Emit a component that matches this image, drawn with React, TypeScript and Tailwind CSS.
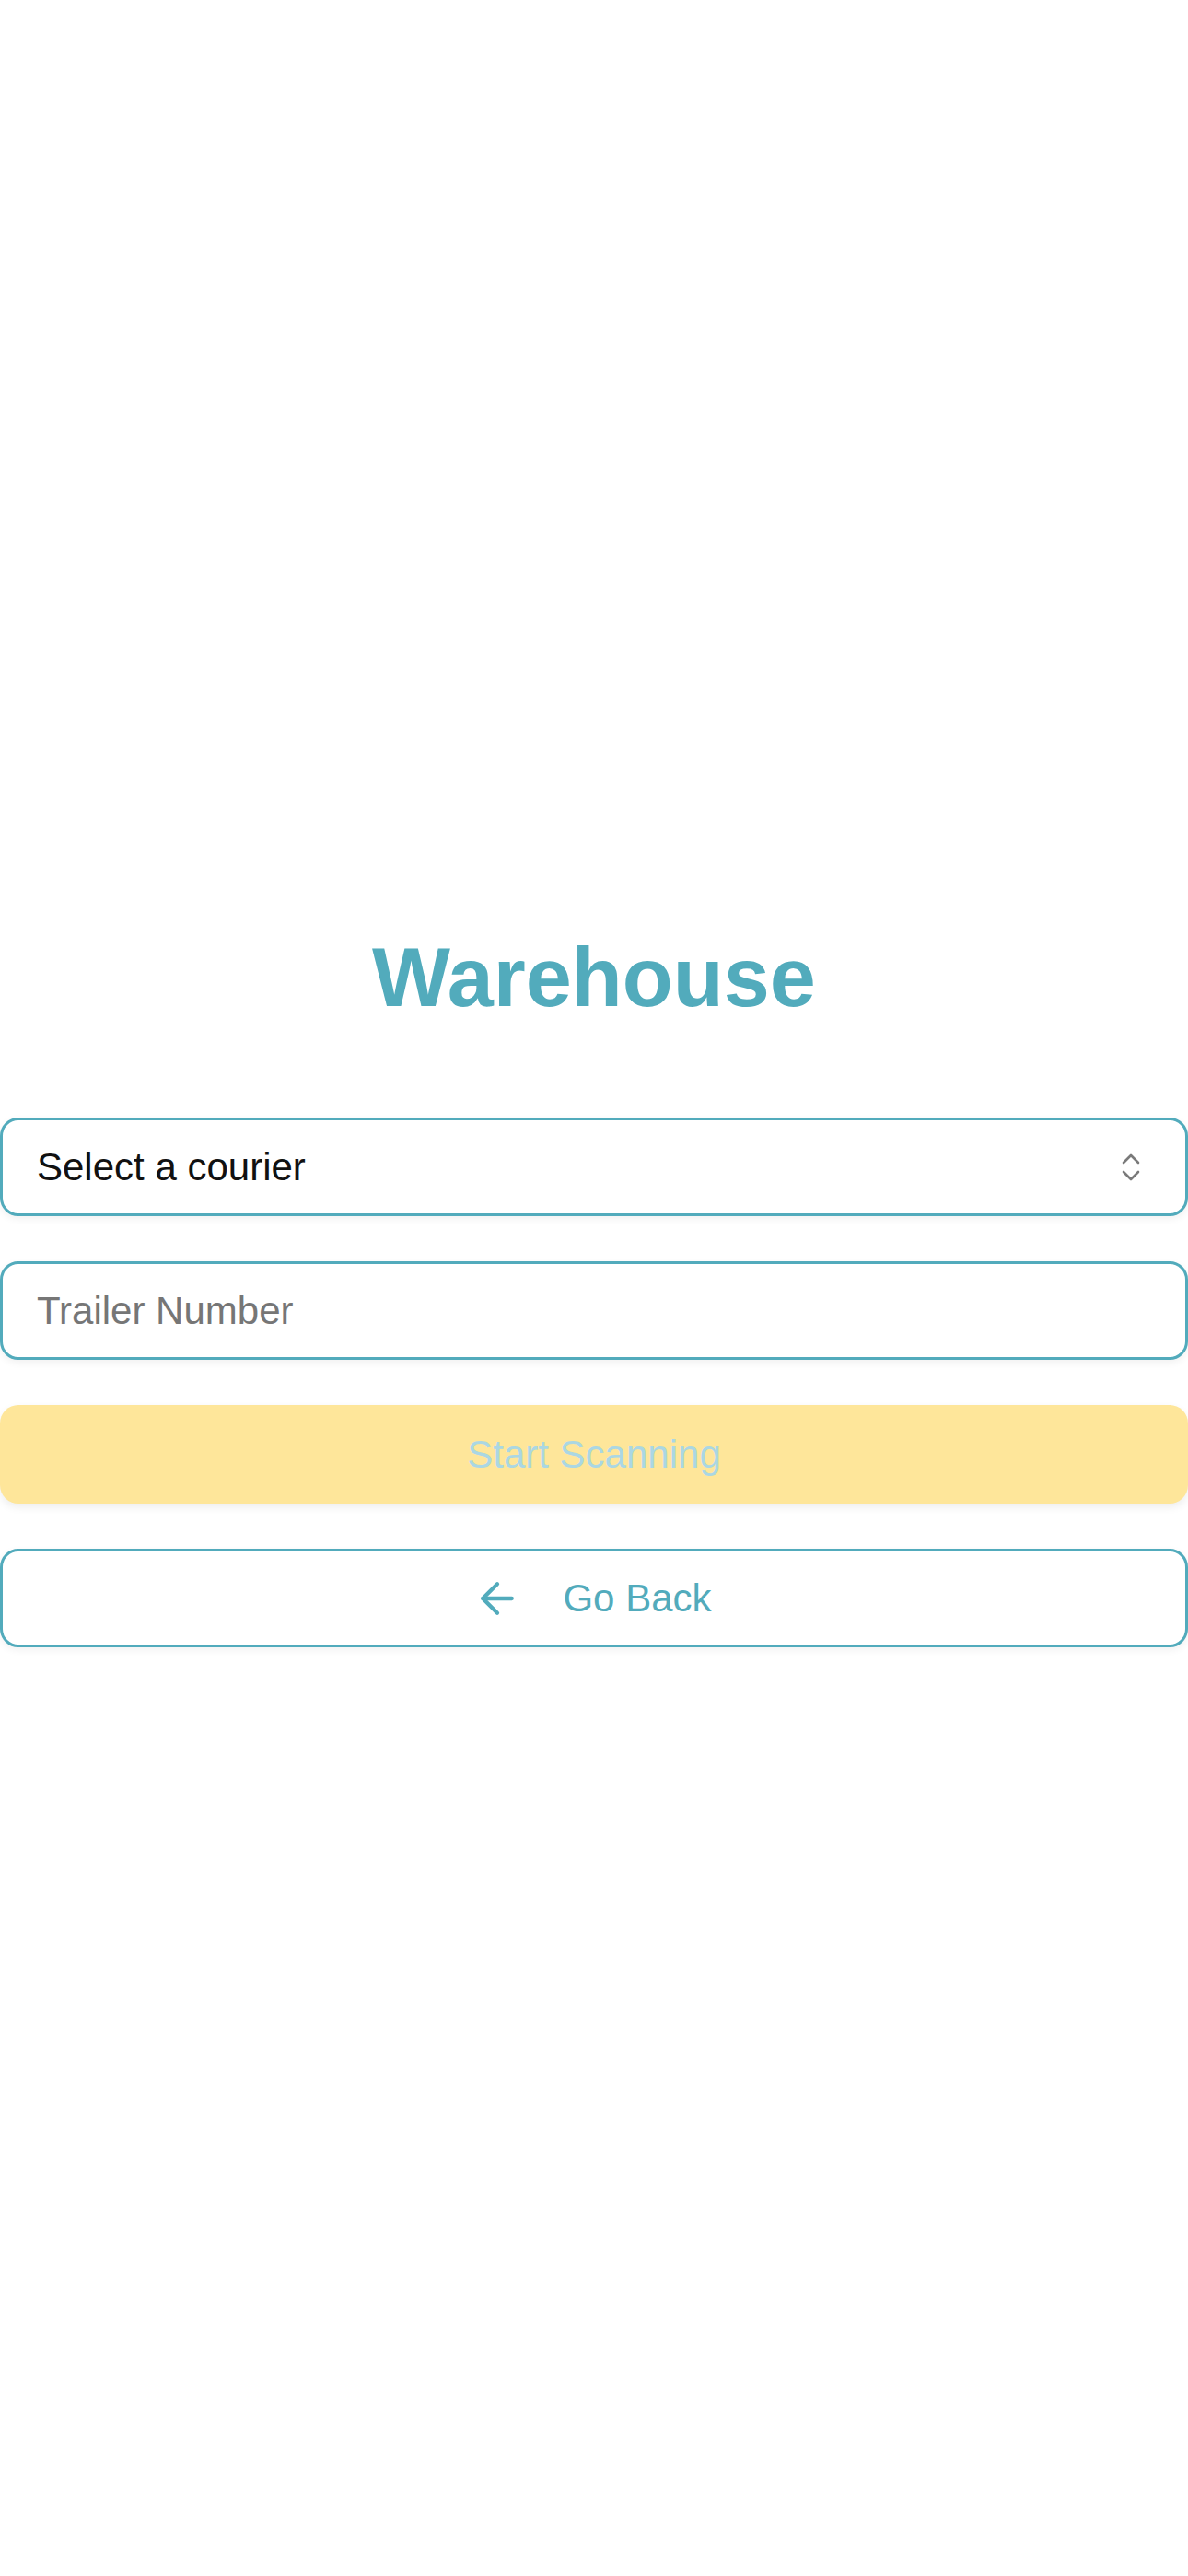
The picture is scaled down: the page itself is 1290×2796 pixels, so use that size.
import React, { useState } from 'react';
import { ArrowLeft } from 'lucide-react';

const teal = 'text-[#52abbc]';

const Chevrons = () => (
  <svg width="20" height="30" viewBox="0 0 20 30" fill="none" stroke="#7a7a7a" strokeWidth="2.6" strokeLinecap="round" strokeLinejoin="round">
    <path d="M2 10 L10 2 L18 10" />
    <path d="M2 20 L10 28 L18 20" />
  </svg>
);

const App = () => {
  const [courier, setCourier] = useState('');
  const [trailer, setTrailer] = useState('');

  const canStart = courier !== '' && trailer.trim() !== '';

  return (
    <div className="min-h-screen bg-white flex flex-col justify-center pt-2 font-['Liberation_Sans',Arial,sans-serif]">
      <h1 className={`text-center font-bold text-[90px] leading-[90px] ${teal} mb-[107px]`}>Warehouse</h1>

      <div className="flex flex-col gap-[49px]">
        <div className="relative h-[107px] rounded-[20px] border-[3px] border-[#52abbc] bg-white shadow-[0_3px_8px_rgba(0,0,0,0.06)]">
          <select
            value={courier}
            onChange={(e) => setCourier(e.target.value)}
            className="appearance-none w-full h-full bg-transparent pl-[37px] pr-[80px] text-[42px] text-[#111] outline-none rounded-[20px]"
          >
            <option value="">Select a courier</option>
            <option value="ups">UPS</option>
            <option value="fedex">FedEx</option>
            <option value="dhl">DHL</option>
          </select>
          <div className="pointer-events-none absolute right-[49px] top-1/2 -translate-y-1/2 flex">
            <Chevrons />
          </div>
        </div>

        <input
          value={trailer}
          onChange={(e) => setTrailer(e.target.value)}
          placeholder="Trailer Number"
          className="h-[107px] w-full rounded-[20px] border-[3px] border-[#52abbc] bg-white pl-[37px] text-[42px] text-[#111] placeholder:text-[#767676] outline-none shadow-[0_3px_8px_rgba(0,0,0,0.06)]"
        />

        <button
          disabled={!canStart}
          className="h-[107px] w-full rounded-[20px] bg-[#fee69a] text-[42px] text-[#abd7e3] shadow-[0_4px_10px_rgba(0,0,0,0.07)]"
        >
          Start Scanning
        </button>

        <button className={`h-[107px] w-full rounded-[20px] border-[3px] border-[#52abbc] bg-white flex items-center justify-center gap-[44px] pr-[4px] text-[42px] ${teal} shadow-[0_3px_8px_rgba(0,0,0,0.06)]`}>
          <ArrowLeft size={54} strokeWidth={1.9} />
          <span>Go Back</span>
        </button>
      </div>
    </div>
  );
};

export default App;
